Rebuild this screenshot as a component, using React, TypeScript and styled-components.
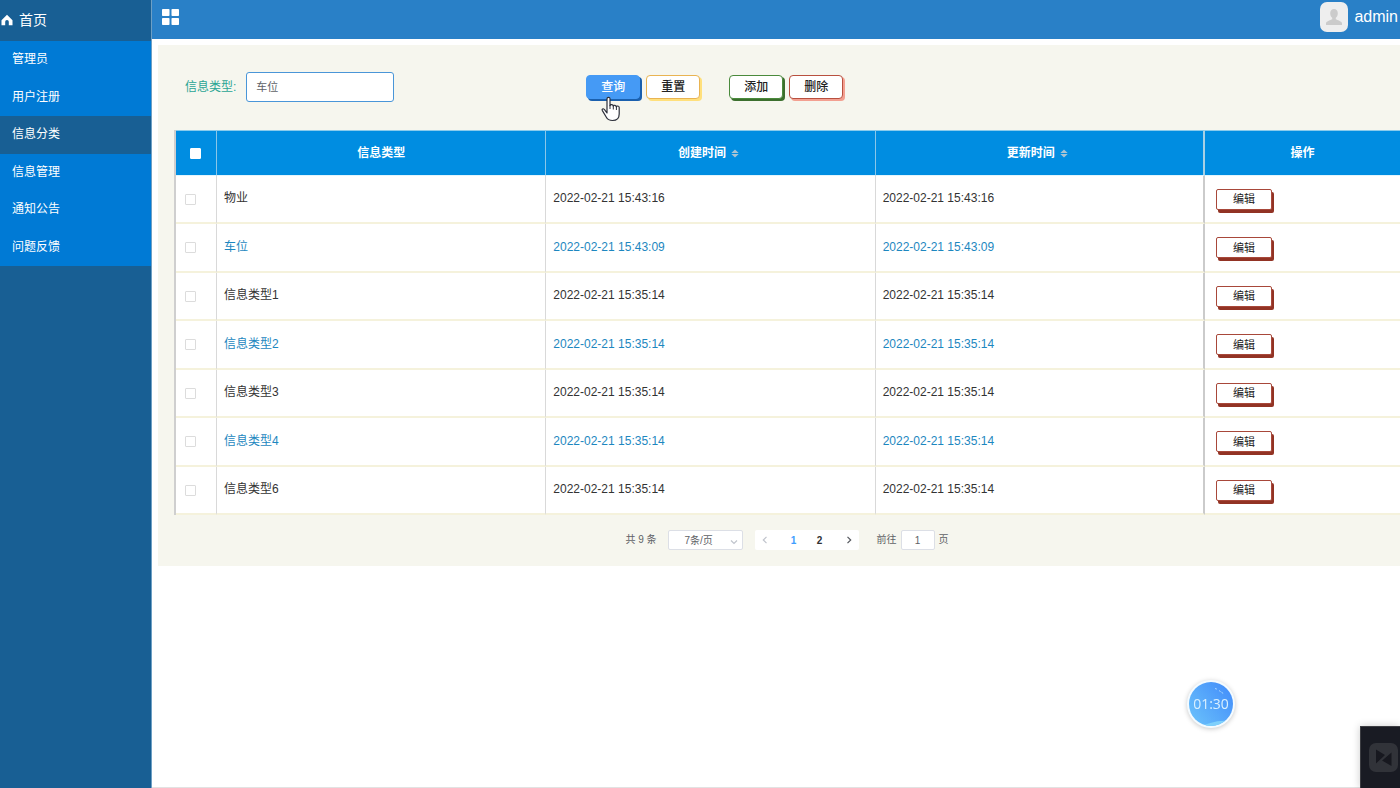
import React from "react";
import styled, { createGlobalStyle, css } from "styled-components";

const GlobalStyle = createGlobalStyle`
  *, *::before, *::after { box-sizing: border-box; }
  html, body, #root { height: 100%; }
  body {
    margin: 0;
    background: #fff;
    color: #333;
    font-family: "Liberation Sans", "Noto Sans CJK SC", sans-serif;
    font-size: 12px;
    line-height: 16px;
    overflow-x: hidden;
  }
  button, input, select { font-family: inherit; margin: 0; }
`;

const Shell = styled.div`
  display: flex;
  min-height: 100%;
`;

const Sidebar = styled.aside`
  flex: 0 0 152px;
  background: #185f94;
  border-right: 1px solid #6d9fc4;
`;

const HomeLink = styled.a`
  display: flex;
  align-items: center;
  gap: 6px;
  height: 41px;
  padding: 0 0 2px 1px;
  color: #fff;
  font-size: 14px;
  text-decoration: none;
`;

const Menu = styled.nav`
  display: flex;
  flex-direction: column;
`;

const MenuItem = styled.a<{ $active?: boolean }>`
  display: flex;
  align-items: center;
  height: 37px;
  padding: 0 12px 2px;
  color: #fff;
  text-decoration: none;
  background: ${(p) => (p.$active ? "#185f94" : "#007ad5")};
  &:nth-child(odd) { height: 38px; }
`;

const Main = styled.div`
  flex: 1;
  min-width: 0;
  border-bottom: 1px solid #e2e2e2;
`;

const TopBar = styled.header`
  display: flex;
  align-items: center;
  justify-content: space-between;
  height: 39px;
  padding: 0 2px 5px 10px;
  background: #2980c7;
`;

const IconButton = styled.button`
  display: flex;
  padding: 0;
  border: 0;
  background: none;
`;

const User = styled.div`
  display: flex;
  align-items: center;
  gap: 6px;
  color: #fff;
  font-size: 16px;
`;

const Avatar = styled.span`
  display: flex;
  align-items: center;
  justify-content: center;
  width: 28px;
  height: 30px;
  border-radius: 7px;
  background: #eee;
`;

const Panel = styled.main`
  margin: 6px 0 0 6px;
  padding: 27px 0 16px 16px;
  background: #f6f6ee;
`;

const SearchForm = styled.form`
  display: flex;
  align-items: center;
  gap: 192px;
  height: 30px;
  padding-left: 11px;
`;

const Field = styled.div`
  display: flex;
  align-items: center;
  gap: 10px;
  label { color: #2aa594; }
`;

const TextInput = styled.input`
  width: 148px;
  height: 30px;
  padding: 0 9px 2px;
  border: 1px solid #4a96d8;
  border-radius: 3px;
  background: #fff;
  color: #606266;
  font-size: 11px;
  outline: none;
`;

const Actions = styled.div`
  display: flex;
  gap: 29px;
`;

const ButtonPair = styled.div`
  display: flex;
  gap: 6px;
`;

type Tone = "blue" | "yellow" | "green" | "red";
const tones = {
  blue: css`background: #459af5; border-color: #459af5; color: #fff; box-shadow: 2px 2px 0 #1a60ae;`,
  yellow: css`border-color: #e9b452; box-shadow: 2px 2px 0 #ffe07c;`,
  green: css`border-color: #4a8a3c; box-shadow: 2px 2px 0 #3c6f2e;`,
  red: css`border-color: #b8503f; box-shadow: 2px 2px 0 #f3a091;`,
};

const ActionButton = styled.button<{ $tone: Tone }>`
  width: 54px;
  height: 24px;
  padding: 0;
  border: 1px solid;
  border-radius: 4px;
  background: #fff;
  color: #222;
  font-size: 12px;
  font-weight: 500;
  line-height: 20px;
  ${(p) => tones[p.$tone]}
`;

const Table = styled.table`
  width: 100%;
  margin-top: 28px;
  table-layout: fixed;
  border-collapse: separate;
  border-spacing: 0;
  border-left: 2px solid #cfcfcf;
  background: #fff;
`;

const HeadCell = styled.th<{ $width?: number }>`
  width: ${(p) => (p.$width ? `${p.$width}px` : "auto")};
  height: 46px;
  padding: 0;
  border-top: 1px solid #8acbec;
  border-right: 1px solid #8ac6e8;
  border-bottom: 1px solid #e3f5fd;
  background: #008de1;
  color: #fff;
  font-weight: 700;
  text-align: center;
  &:first-child { padding-right: 2px; }
  &:nth-last-child(2) { border-right: 2px solid #a8d0e4; }
  &:last-child { border-right: 0; }
`;

const HeadLabel = styled.span`
  display: inline-flex;
  align-items: center;
  gap: 5px;
  padding-right: 4px;
`;

const Cell = styled.td`
  height: 48px;
  padding: 0 7px 2px;
  border-right: 1px solid #d9d9d9;
  border-bottom: 2px solid #f5f2dc;
  vertical-align: middle;
  &:first-child { padding-left: 8px; }
  &:nth-last-child(2) { border-right: 2px solid #cbcbcb; }
  &:last-child { border-right: 0; padding: 0 11px; }
`;

const Row = styled.tr`
  color: #333;
  &:nth-child(even) { color: #1d87c0; }
  &:nth-child(even) ${Cell} { height: 49px; }
`;

const Check = styled.input<{ $head?: boolean }>`
  display: block;
  appearance: none;
  width: 11px;
  height: 11px;
  margin: ${(p) => (p.$head ? "0 auto" : "2px 0 0 1px")};
  border: 1px solid ${(p) => (p.$head ? "#fff" : "#dcdcdc")};
  border-radius: 1px;
  background: #fff;
`;

const EditButton = styled.button`
  display: block;
  width: 56px;
  height: 21px;
  padding: 0;
  border: 1px solid #a8483a;
  border-radius: 2px;
  background: #fff;
  color: #222;
  font-size: 11px;
  line-height: 18px;
  box-shadow: 2px 3px 0 #923324;
`;

const Pagination = styled.div`
  display: flex;
  align-items: center;
  justify-content: center;
  height: 20px;
  margin-top: 15px;
  color: #606266;
  font-size: 10px;
`;

const SizePicker = styled.label`
  position: relative;
  margin: 0 12px 0 11px;
  svg { position: absolute; right: 5px; top: 8px; pointer-events: none; }
`;

const SizeSelect = styled.select`
  display: block;
  appearance: none;
  width: 75px;
  height: 20px;
  padding: 0 13px 0 0;
  border: 1px solid #dcdfe6;
  border-radius: 2px;
  background: #fff;
  color: #606266;
  font-size: 10px;
  text-align: center;
  text-align-last: center;
`;

const Pager = styled.div`
  display: flex;
  gap: 6px;
  height: 20px;
  margin-right: 18px;
  background: #fff;
  border-radius: 2px;
`;

const PageNumbers = styled.div`
  display: flex;
`;

const PageButton = styled.button<{ $current?: boolean; $arrow?: boolean }>`
  display: flex;
  align-items: center;
  justify-content: center;
  width: ${(p) => (p.$arrow ? 20 : 26)}px;
  height: 20px;
  padding: 0;
  border: 0;
  background: none;
  color: ${(p) => (p.$current ? "#409eff" : "#303133")};
  font-size: 10px;
  font-weight: 700;
`;

const Jump = styled.label`
  display: flex;
  align-items: center;
  gap: 4px;
`;

const JumpInput = styled.input`
  width: 34px;
  height: 20px;
  padding: 0;
  border: 1px solid #dcdfe6;
  border-radius: 2px;
  background: #fff;
  color: #606266;
  font-size: 10px;
  text-align: center;
`;

const Cursor = styled.svg`
  position: absolute;
  left: 15px;
  top: 21px;
  z-index: 2;
  pointer-events: none;
`;

const CursorAnchor = styled.span`
  position: relative;
  display: flex;
`;

const Timer = styled.div`
  position: fixed;
  right: 165px;
  bottom: 60px;
  display: flex;
  align-items: center;
  justify-content: center;
  width: 48px;
  height: 48px;
  border-radius: 50%;
  background: #f4fbff;
  box-shadow: 0 1px 5px rgba(0, 0, 0, 0.22);
  color: #d9f0ff;
  font-family: "Open Sans", sans-serif;
  font-size: 14px;
  svg { position: absolute; inset: 0; }
  span { position: relative; }
`;

const Dock = styled.div`
  position: fixed;
  right: 0;
  bottom: 0;
  width: 40px;
  height: 62px;
  padding: 16px 0 0 8px;
  overflow: hidden;
  border: solid #3c3d42;
  border-width: 1px 0 0 1px;
  background: #191b23;
  box-shadow: 0 0 8px rgba(0, 0, 0, 0.2);
  svg { display: block; }
`;

const menu = ["管理员", "用户注册", "信息分类", "信息管理", "通知公告", "问题反馈"];

const rows = [
  ["物业", "2022-02-21 15:43:16"],
  ["车位", "2022-02-21 15:43:09"],
  ["信息类型1", "2022-02-21 15:35:14"],
  ["信息类型2", "2022-02-21 15:35:14"],
  ["信息类型3", "2022-02-21 15:35:14"],
  ["信息类型4", "2022-02-21 15:35:14"],
  ["信息类型6", "2022-02-21 15:35:14"],
];

const SortIcon = () => (
  <svg width="8" height="9" viewBox="0 0 8 9" fill="#a9c3d3" aria-hidden="true">
    <path d="M4 0.5 7.7 4H0.3zM4 8.5 7.7 5H0.3z" />
  </svg>
);

const Chevron = ({ d, color }: { d: string; color: string }) => (
  <svg width="8" height="8" viewBox="0 0 8 8" fill="none" stroke={color} strokeWidth="1.2" aria-hidden="true">
    <path d={d} />
  </svg>
);

export default function App() {
  return (
    <>
      <GlobalStyle />
      <Shell>
        <Sidebar>
          <HomeLink href="#home">
            <svg width="12" height="12" viewBox="0 0 12 12" fill="#fff" aria-hidden="true">
              <path d="M6 0.8 11.5 6.2V11.2H7.8V7.8a1.8 1.8 0 0 0-3.6 0V11.2H0.5V6.2z" />
            </svg>
            首页
          </HomeLink>
          <Menu>
            {menu.map((name) => (
              <MenuItem key={name} href={`#${name}`} $active={name === "信息分类"}>
                {name}
              </MenuItem>
            ))}
          </Menu>
        </Sidebar>
        <Main>
          <TopBar>
            <IconButton type="button" aria-label="菜单">
              <svg width="17" height="16" viewBox="0 0 17 16" fill="#fff">
                <rect width="7.5" height="7" rx="0.8" />
                <rect x="9.5" width="7.5" height="7" rx="0.8" />
                <rect y="9" width="7.5" height="7" rx="0.8" />
                <rect x="9.5" y="9" width="7.5" height="7" rx="0.8" />
              </svg>
            </IconButton>
            <User>
              <Avatar>
                <svg width="16" height="16" viewBox="0 0 16 16" fill="#cbcbcb" aria-hidden="true">
                  <path d="M8 0C5.600 0 4.200 1.700 4.200 4.200c0 2 .8 3.700 2 4.600v1.500C4.500 11.300 .8 12 0 14v2h16v-2c-.8-2-4.500-2.700-6.200-3.700V8.800c1.200-.9 2-2.600 2-4.600C11.800 1.700 10.400 0 8 0z" />
                </svg>
              </Avatar>
              admin
            </User>
          </TopBar>
          <Panel>
            <SearchForm onSubmit={(e) => e.preventDefault()}>
              <Field>
                <label htmlFor="type">信息类型:</label>
                <TextInput id="type" defaultValue="车位" />
              </Field>
              <Actions>
                <ButtonPair>
                  <CursorAnchor>
                    <ActionButton type="submit" $tone="blue">查询</ActionButton>
                    <Cursor width="20" height="26" viewBox="0 0 20 26" aria-hidden="true">
                      <path
                        d="M6 17 3.500 13.600C2 12 .6 13 1.400 14.600L5.200 21C6.500 23.500 8.500 24.500 11.500 24.500C16 24.500 18.200 22 18.200 18V11.500C18.200 9.700 15.800 9.500 15.400 11C15.300 9 12.600 8.700 12.300 10.200C12 8.400 9.300 8.200 9 9.600V2.800C9 .8 6 .8 6 2.800z"
                        fill="#fff"
                        stroke="#2c2f3a"
                        strokeWidth="1.200"
                        strokeLinejoin="round"
                      />
                      <path d="M9 9v4M12.300 10V13.500M15.400 11V14" stroke="#2c2f3a" fill="none" />
                    </Cursor>
                  </CursorAnchor>
                  <ActionButton type="reset" $tone="yellow">重置</ActionButton>
                </ButtonPair>
                <ButtonPair>
                  <ActionButton type="button" $tone="green">添加</ActionButton>
                  <ActionButton type="button" $tone="red">删除</ActionButton>
                </ButtonPair>
              </Actions>
            </SearchForm>
            <Table>
              <thead>
                <tr>
                  <HeadCell $width={41}><Check $head type="checkbox" aria-label="全选" /></HeadCell>
                  <HeadCell>信息类型</HeadCell>
                  <HeadCell><HeadLabel>创建时间<SortIcon /></HeadLabel></HeadCell>
                  <HeadCell><HeadLabel>更新时间<SortIcon /></HeadLabel></HeadCell>
                  <HeadCell $width={195}>操作</HeadCell>
                </tr>
              </thead>
              <tbody>
                {rows.map(([name, time]) => (
                  <Row key={name}>
                    <Cell><Check type="checkbox" aria-label={name} /></Cell>
                    <Cell>{name}</Cell>
                    <Cell>{time}</Cell>
                    <Cell>{time}</Cell>
                    <Cell><EditButton type="button">编辑</EditButton></Cell>
                  </Row>
                ))}
              </tbody>
            </Table>
            <Pagination>
              <span>共 9 条</span>
              <SizePicker>
                <SizeSelect aria-label="每页条数" defaultValue="7">
                  <option value="7">7条/页</option>
                </SizeSelect>
                <Chevron d="M1 2.500 4 5.500 7 2.500" color="#c0c4cc" />
              </SizePicker>
              <Pager>
                <PageButton $arrow type="button" aria-label="上一页" disabled>
                  <Chevron d="M5.500 .8 2.300 4 5.500 7.200" color="#c0c4cc" />
                </PageButton>
                <PageNumbers>
                  <PageButton type="button" $current>1</PageButton>
                  <PageButton type="button">2</PageButton>
                </PageNumbers>
                <PageButton $arrow type="button" aria-label="下一页">
                  <Chevron d="M2.500 .8 5.700 4 2.500 7.200" color="#55585e" />
                </PageButton>
              </Pager>
              <Jump>
                前往
                <JumpInput defaultValue="1" />
                页
              </Jump>
            </Pagination>
          </Panel>
        </Main>
      </Shell>
      <Timer>
        <svg width="48" height="48" viewBox="0 0 48 48" aria-hidden="true">
          <defs>
            <linearGradient id="sky" x1="0" y1="1" x2="1" y2="0.200">
              <stop offset="0" stopColor="#6cc4fb" />
              <stop offset="1" stopColor="#448ffa" />
            </linearGradient>
            <clipPath id="disc"><circle cx="24" cy="24" r="22" /></clipPath>
          </defs>
          <circle cx="24" cy="24" r="22" fill="url(#sky)" />
          <path d="M14 46C22 44 28 40 42 41V48H14z" fill="#7fd0fb" clipPath="url(#disc)" />
          <path d="M28 8.500l2.500.8M32 10.500l5 3.500" stroke="#a9d6ff" strokeDasharray="2 1" fill="none" />
        </svg>
        <span>01:30</span>
      </Timer>
      <Dock>
        <svg width="29" height="29" viewBox="0 0 29 29" aria-hidden="true">
          <rect width="29" height="29" rx="7" fill="#313339" />
          <path d="M7 6.500 16 12 7 20.500zM22.500 9.500V23L13 17.500z" fill="#17181f" />
          <path d="M10.500 19 19 11" stroke="#313339" strokeWidth="1.200" />
        </svg>
      </Dock>
    </>
  );
}
